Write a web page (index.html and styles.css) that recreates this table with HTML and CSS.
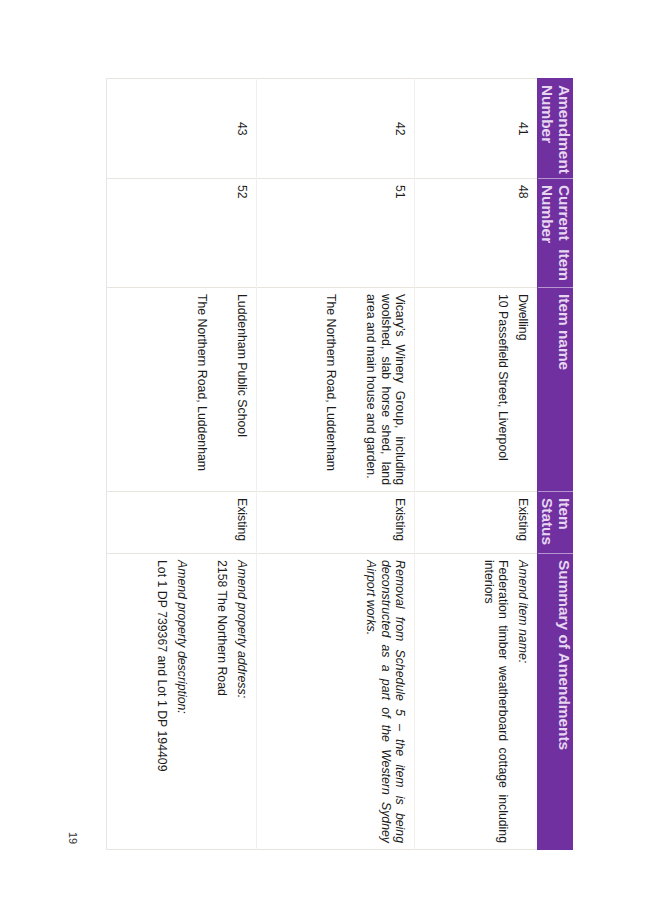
FILE: index.html
```html
<!DOCTYPE html>
<html lang="en">
<head>
<meta charset="utf-8">
<title>Schedule 5 amendments</title>
<link rel="stylesheet" href="styles.css">
</head>
<body>
<div class="page">
  <table class="amend">
    <colgroup>
      <col class="c1"><col class="c2"><col class="c3"><col class="c4"><col class="c5">
    </colgroup>
    <thead>
      <tr class="head">
        <th>Amendment Number</th>
        <th>Current Item Number</th>
        <th>Item name</th>
        <th>Item Status</th>
        <th>Summary of Amendments</th>
      </tr>
    </thead>
    <tbody>
      <tr class="r41">
        <td class="num">41</td>
        <td>48</td>
        <td><p>Dwelling</p><p>10 Passefield Street, Liverpool</p></td>
        <td>Existing</td>
        <td><p><em>Amend item name:</em></p><p>Federation timber weatherboard cottage including interiors</p></td>
      </tr>
      <tr class="r42">
        <td class="num">42</td>
        <td>51</td>
        <td><p>Vicary’s Winery Group, including woolshed, slab horse shed, land area and main house and garden.</p><p>&nbsp;</p><p>The Northern Road, Luddenham</p></td>
        <td>Existing</td>
        <td><p><em>Removal from Schedule 5 – the item is being deconstructed as a part of the Western Sydney Airport works.</em></p></td>
      </tr>
      <tr class="r43">
        <td class="num">43</td>
        <td>52</td>
        <td><p>Luddenham Public School</p><p>&nbsp;</p><p>The Northern Road, Luddenham</p></td>
        <td>Existing</td>
        <td><p><em>Amend property address:</em></p><p>2158 The Northern Road</p><p>&nbsp;</p><p><em>Amend property description:</em></p><p>Lot 1 DP 739367 and Lot 1 DP 194409</p></td>
      </tr>
    </tbody>
  </table>
  <div class="pagenum">19</div>
</div>
</body>
</html>
```
FILE: styles.css
```css
* { box-sizing: border-box; }
html, body { margin: 0; padding: 0; background: #ffffff; }

.page {
  writing-mode: vertical-rl;
  width: 653px;
  height: 924px;
  padding: 78px 80px 0 0;
  font-family: "Liberation Sans", Arial, sans-serif;
  color: #1b1b1b;
}

.amend {
  border-collapse: collapse;
  table-layout: fixed;
  inline-size: 771px;
}
.c1 { inline-size: 100px; }
.c2 { inline-size: 109px; }
.c3 { inline-size: 204px; }
.c4 { inline-size: 62px; }
.c5 { inline-size: 296px; }

.amend th {
  background: #7030a0;
  color: #e6d6f0;
  font-weight: bold;
  font-size: 15.4px;
  line-height: 17px;
  text-align: justify;
  vertical-align: top;
  padding-block: 0 1px;
  padding-inline: 6px;
  block-size: 35px;
  border-inline-start: 1px solid #b696cf;
  border-inline-end: 1px solid #b696cf;
  border-block-end: 1px solid #7030a0;
  border-block-start: 0;
}
.amend th:first-child { border-inline-start-color: #7030a0; }
.amend th:last-child { border-inline-end-color: #7030a0; }

.amend td {
  font-size: 12.3px;
  line-height: 14.5px;
  text-align: justify;
  vertical-align: top;
  padding-block: 7px 0;
  padding-inline: 6px;
  border-inline: 1px solid #e8e4de;
  border-block: 1px solid #f2f0ec;
}
.amend tr.r43 td { border-block-end-color: #e9e6e1; }
.amend td.num { text-align: center; }
.amend p { margin-block: 0 5.5px; margin-inline: 0; }

.r41 td { block-size: 123px; }
.r42 td { block-size: 158px; }
.r43 td { block-size: 150px; }

.pagenum {
  inline-size: 771px;
  margin-block-start: 27px;
  padding-inline-end: 5px;
  text-align: end;
  font-size: 11px;
  line-height: 13px;
  color: #333333;
}
```
